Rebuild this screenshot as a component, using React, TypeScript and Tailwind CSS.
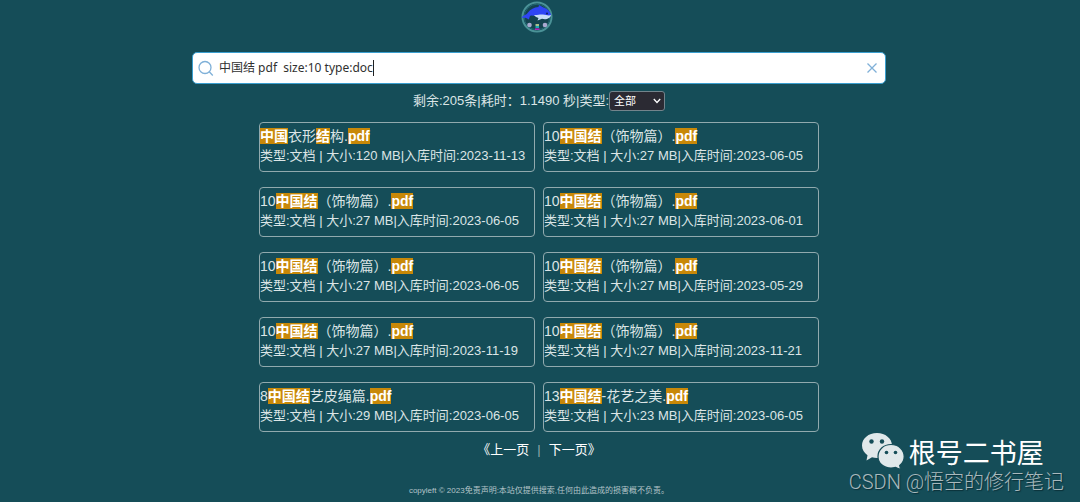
import { Fragment, useState } from 'react';

interface Part {
    text: string;
    hit?: boolean;
}

interface Result {
    id: number;
    title: Part[];
    size: string;
    date: string;
}

const knot: Part[] = [
    { text: '10' },
    { text: '中国结', hit: true },
    { text: '（饰物篇）.' },
    { text: 'pdf', hit: true },
];

const results: Result[] = [
    {
        id: 1,
        title: [
            { text: '中国', hit: true },
            { text: '衣形' },
            { text: '结', hit: true },
            { text: '构.' },
            { text: 'pdf', hit: true },
        ],
        size: '120 MB',
        date: '2023-11-13',
    },
    { id: 2, title: knot, size: '27 MB', date: '2023-06-05' },
    { id: 3, title: knot, size: '27 MB', date: '2023-06-05' },
    { id: 4, title: knot, size: '27 MB', date: '2023-06-01' },
    { id: 5, title: knot, size: '27 MB', date: '2023-06-05' },
    { id: 6, title: knot, size: '27 MB', date: '2023-05-29' },
    { id: 7, title: knot, size: '27 MB', date: '2023-11-19' },
    { id: 8, title: knot, size: '27 MB', date: '2023-11-21' },
    {
        id: 9,
        title: [
            { text: '8' },
            { text: '中国结', hit: true },
            { text: '艺皮绳篇.' },
            { text: 'pdf', hit: true },
        ],
        size: '29 MB',
        date: '2023-06-05',
    },
    {
        id: 10,
        title: [
            { text: '13' },
            { text: '中国结', hit: true },
            { text: '-花艺之美.' },
            { text: 'pdf', hit: true },
        ],
        size: '23 MB',
        date: '2023-06-05',
    },
];

function Logo() {
    return (
        <svg viewBox="0 0 32 32" className="h-8 w-8" role="img" aria-label="logo">
            <circle cx="16" cy="16" r="14.5" fill="#14434f" stroke="#4a9297" strokeWidth="2" />
            <circle cx="16" cy="16" r="12.8" fill="none" stroke="#216873" strokeWidth="1" />
            <path
                d="M0.500 17C2 14 5 14.500 7 11.500C9.500 8 13 6.500 17.500 6L18 4L22.500 6.500C26.500 8 29.500 10.500 30 14C29.500 16.500 26 17.500 22 17C18 16.500 14 14.500 10 14.500C8 15 9 17.500 7.500 18.500C6 16.500 3 16.500 0.500 17Z"
                fill="#2f45f5"
            />
            <path d="M13 14C17 14.200 19 13 22 13.500C25 14 28 15 30 14C29.500 17.500 25 19 21 17.800L16.500 19.500L17.500 17C16 16.500 14 15.500 13 14Z" fill="#c8dcf6" />
            <circle cx="26" cy="12.500" r="0.900" fill="#101c50" />
            <circle cx="8.500" cy="24" r="2.300" fill="#a9a9d0" />
            <circle cx="24" cy="24" r="2.300" fill="#a9a9d0" />
            <path d="M14.500 24h3.500" stroke="#d8e8a0" strokeWidth="1.500" />
            <path d="M14.500 26h3.500" stroke="#20c8d8" strokeWidth="1.500" />
            <path d="M14 28.200h4.500" stroke="#c020c0" strokeWidth="1.500" />
        </svg>
    );
}

function WechatIcon() {
    return (
        <svg viewBox="0 0 44 38" className="h-[38px] w-11" aria-hidden="true">
            <path
                d="M16 1C7.500 1 1 6.500 1 13.500C1 17.500 3.200 21 6.500 23.300L5.500 28.500L11 25.300C12.600 25.800 14.300 26 16 26C24.300 26 31 20.500 31 13.500C31 6.500 24.300 1 16 1Z"
                fill="#e0e8ea"
            />
            <path
                d="M30 12.500C22.500 12.500 17 17.800 17 24.500C17 31.200 22.500 36 30 36C31.500 36 33 35.800 34.500 35.300L39.500 37.500L38.700 33.500C41.600 31.300 43.200 28 43.200 24.500C43.200 17.800 37.500 12.500 30 12.500Z"
                fill="#e0e8ea"
                stroke="#154d58"
                strokeWidth="1.200"
            />
            <g fill="#154d58">
                <circle cx="10.500" cy="9.500" r="2.200" />
                <circle cx="21" cy="9.500" r="2.200" />
                <circle cx="25.500" cy="20.500" r="1.800" />
                <circle cx="34.500" cy="20.500" r="1.800" />
            </g>
        </svg>
    );
}

function SearchBar() {
    const [query, setQuery] = useState('中国结 pdf  size:10 type:doc');

    return (
        <form
            onSubmit={(e) => e.preventDefault()}
            className="flex h-8 w-full max-w-[694px] items-center rounded-[5px] border border-[#3a9fd0] bg-white pr-2 pl-[5px]"
        >
            <button type="submit" aria-label="搜索" className="mr-1 shrink-0">
                <svg viewBox="0 0 16 16" className="h-4 w-4" fill="none" stroke="#7fb0d8" strokeWidth="1.3">
                    <circle cx="7" cy="7.500" r="6" />
                    <path d="M11.300 11.800L14.800 15.500" />
                </svg>
            </button>
            <input
                type="text"
                aria-label="搜索内容"
                value={query}
                onChange={(e) => setQuery(e.target.value)}
                className="field-sizing-content whitespace-pre pl-px font-['Noto_Sans','Noto_Sans_CJK_SC',sans-serif] text-[12px] text-[#303030] caret-transparent outline-none"
            />
            <span className="h-4 w-px bg-[#202020]" />
            <button type="button" aria-label="清空" onClick={() => setQuery('')} className="ml-auto">
                <svg viewBox="0 0 10 10" className="h-2.5 w-2.5" stroke="#7fb0d8" strokeWidth="1.3">
                    <path d="M0.500 0.500L9.500 9.500M9.500 0.500L0.500 9.500" />
                </svg>
            </button>
        </form>
    );
}

function ResultCard({ result }: { result: Result }) {
    return (
        <li className="rounded-[4px] border border-[#91aaae] pt-[3px] pb-[5px]">
            <h2 className="text-[14px] leading-5">
                <a href="#">
                    {result.title.map((part, i) =>
                        part.hit ? (
                            <em key={i} className="bg-[#c88808] font-bold text-white not-italic">{part.text}</em>
                        ) : (
                            <Fragment key={i}>{part.text}</Fragment>
                        )
                    )}
                </a>
            </h2>
            <p className="text-[13px] leading-5 whitespace-nowrap">
                类型:文档 | 大小:{result.size}|入库时间:{result.date}
            </p>
        </li>
    );
}

export default function App() {
    return (
        <div className="relative flex min-h-screen flex-col items-center bg-[#154d58] pt-px pr-0.5 font-['Liberation_Sans','Noto_Sans_CJK_SC',sans-serif] text-[#dce5e6]">
            <header className="mb-[19px] pr-1">
                <Logo />
            </header>

            <SearchBar />

            <div className="mt-1.5 flex h-[22px] items-center text-[13px]">
                <label htmlFor="type">剩余:205条|耗时：1.1490 秒|类型:</label>
                <div className="relative flex items-center">
                    <select
                        id="type"
                        className="h-5 w-14 appearance-none rounded-[3px] border border-[#73848c] bg-[#2b2a33] pl-1 text-[11px] text-white"
                    >
                        <option>全部</option>
                        <option>文档</option>
                    </select>
                    <svg viewBox="0 0 8 6" className="pointer-events-none absolute right-1 h-1.5 w-2" fill="none" stroke="#ffffff" strokeWidth="1.3">
                        <path d="M0.800 1L4 4.500L7.200 1" />
                    </svg>
                </div>
            </div>

            <ul className="mt-2.5 grid w-full max-w-[560px] grid-cols-2 gap-x-2 gap-y-[15px]">
                {results.map((r) => (
                    <ResultCard key={r.id} result={r} />
                ))}
            </ul>

            <nav className="mt-2 flex gap-2 text-[13px] leading-5 text-white">
                <a href="#">《上一页</a>
                <span className="text-[#91aaae]">|</span>
                <a href="#">下一页》</a>
            </nav>

            <footer className="mt-auto pb-[5px] text-[8px] leading-3 text-[#b4c4c8]">
                copyleft © 2023免责声明:本站仅提供搜索,任何由此造成的损害概不负责。
            </footer>

            {/* watermark */}
            <div className="pointer-events-none absolute right-4 bottom-2">
                <div className="flex items-end gap-1 pl-3">
                    <WechatIcon />
                    <span className="text-[27px] leading-8 text-white">根号二书屋</span>
                </div>
                <div className="font-['Roboto','Noto_Sans_CJK_SC',sans-serif] text-[20px] leading-6 font-light whitespace-nowrap text-[#a9b9bd] [text-shadow:1px_1px_1px_#0a3038]">
                    CSDN @悟空的修行笔记
                </div>
            </div>
        </div>
    );
}
